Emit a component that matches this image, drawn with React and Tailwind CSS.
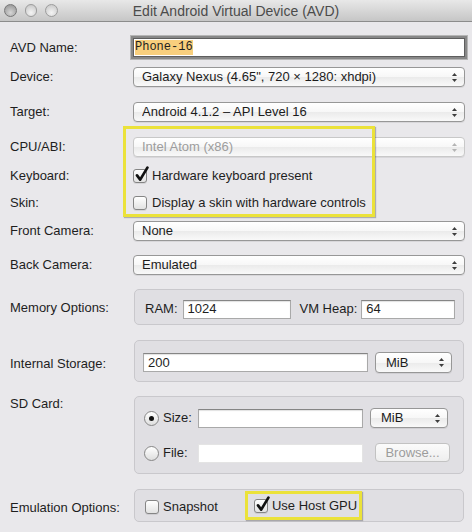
import React from 'react';

const Arrows = ({ color = '#3d3d3d' }) => (
    <svg width="7" height="11" viewBox="0 0 7 11" className="shrink-0">
        <path d="M1 4L3.5 1L6 4Z" fill={color} />
        <path d="M1 7L3.5 10L6 7Z" fill={color} />
    </svg>
);

function Select({ value, disabled, className = '' }) {
    return (
        <div
            className={`flex items-center h-5 pl-[8px] pr-[6px] rounded-[4px] border bg-[linear-gradient(to_bottom,#ffffff_0%,#f7f7f7_50%,#ebebeb_52%,#f9f9f9_100%)] shadow-[0_1px_0_rgba(0,0,0,0.07)] ${disabled ? 'border-[#c8c8c8] text-[#9d9d9d]' : 'border-[#979797] text-[#1c1c1c]'} ${className}`}
        >
            <span className="flex-1 truncate">{value}</span>
            <Arrows color={disabled ? '#b4b4b4' : '#3d3d3d'} />
        </div>
    );
}

function Field({ value = '', className = '', disabled }) {
    return (
        <div
            className={`flex items-center h-[19px] px-[4px] bg-white border ${disabled ? 'border-[#e4e4e4]' : 'border-[#a9a9a9] border-t-[#858585] shadow-[inset_0_1px_1px_rgba(0,0,0,0.12)]'} ${className}`}
        >
            {value}
        </div>
    );
}

function Checkbox({ checked }) {
    return (
        <span className="relative block w-[14px] h-[14px] shrink-0 rounded-[3px] border border-[#858585] bg-[linear-gradient(to_bottom,#ffffff,#e2e2e2)] shadow-[0_1px_0_rgba(0,0,0,0.08)]">
            {checked && (
                <svg className="absolute -top-[4px] left-[0px]" width="16" height="17" viewBox="0 0 16 17">
                    <path d="M3 9.4L6.2 13.6L13.4 1.6" stroke="#111" strokeWidth="2.7" fill="none" strokeLinecap="round" strokeLinejoin="round" />
                </svg>
            )}
        </span>
    );
}

function Radio({ checked }) {
    return (
        <span className="flex items-center justify-center w-[15px] h-[15px] shrink-0 rounded-full border border-[#878787] bg-[linear-gradient(to_bottom,#ffffff,#dedede)]">
            {checked && <span className="w-[5px] h-[5px] rounded-full bg-[#111]" />}
        </span>
    );
}

function Group({ className = '', children }) {
    return (
        <div className={`ml-[1px] w-[330px] rounded-[5px] border border-[#c9c8cc] bg-[#e0dfe3] ${className}`}>
            {children}
        </div>
    );
}

function Row({ label, className = '', labelClass = '', align = 'items-center', children }) {
    return (
        <div className={`flex ${align} ${className}`}>
            <div className={`w-[133px] shrink-0 pl-[10px] ${labelClass}`}>{label}</div>
            <div className="w-[332px]">{children}</div>
        </div>
    );
}

function Light({ dark }) {
    return (
        <span
            className={`block w-[13px] h-[13px] rounded-full border ${dark ? 'border-[#777] bg-[radial-gradient(circle_at_50%_70%,#d6d6d6,#8e8e8e)]' : 'border-[#9c9c9c] bg-[radial-gradient(circle_at_50%_70%,#f4f4f4,#c2c2c2)]'}`}
        />
    );
}

export default function App() {
    return (
        <div className="relative w-[472px] h-[532px] overflow-hidden bg-[#e9e8eb] text-[13px] leading-[16px] text-[#1e1e1e] font-['Liberation_Sans',Arial,sans-serif]">
            {/* title bar */}
            <div className="flex items-center h-[22px] border-b border-[#8c8c8c] bg-[linear-gradient(to_bottom,#e8e8e8,#c6c6c6)]">
                <div className="flex items-center gap-[8px] pl-[4px] w-[58px]">
                    <Light dark />
                    <Light />
                    <Light />
                </div>
                <div className="flex-1 text-center text-[14px] text-[#4b4b4b]">Edit Android Virtual Device (AVD)</div>
                <div className="w-[58px]" />
            </div>

            <div className="flex flex-col">
                <Row label="AVD Name:" className="mt-[16px] h-[19px]">
                    <div className="flex items-center h-[19px] px-[1px] bg-white border border-[#5e5e5e] shadow-[0_0_0_2px_#888888,0_0_0_3px_#b5b5b5]">
                        <span className="bg-[#f8cf7d] font-['Liberation_Mono',monospace] text-[12px] leading-[15px]">Phone-16</span>
                    </div>
                </Row>

                <Row label="Device:" className="mt-[10px] h-5">
                    <Select value={'Galaxy Nexus (4.65", 720 × 1280: xhdpi)'} />
                </Row>

                <Row label="Target:" className="mt-[15px] h-5">
                    <Select value="Android 4.1.2 – API Level 16" />
                </Row>

                <Row label="CPU/ABI:" className="mt-[15px] h-5">
                    <Select value="Intel Atom (x86)" disabled />
                </Row>

                <Row label="Keyboard:" className="mt-[9px] h-5">
                    <div className="flex items-center gap-[5px]">
                        <Checkbox checked />
                        <span>Hardware keyboard present</span>
                    </div>
                </Row>

                <Row label="Skin:" className="mt-[7px] h-5">
                    <div className="flex items-center gap-[5px]">
                        <Checkbox />
                        <span>Display a skin with hardware controls</span>
                    </div>
                </Row>

                <Row label="Front Camera:" className="mt-[8px] h-5">
                    <Select value="None" />
                </Row>

                <Row label="Back Camera:" className="mt-[14px] h-5">
                    <Select value="Emulated" />
                </Row>

                <Row label="Memory Options:" className="mt-[14px] h-[36px]" labelClass="pt-[1px]">
                    <Group className="h-[36px] pt-[9px] pl-[10px]">
                        <div className="flex items-center h-5">
                            <span>RAM:</span>
                            <Field value="1024" className="ml-[5px] w-[108px] h-5" />
                            <span className="ml-[9px]">VM Heap:</span>
                            <Field value="64" className="ml-[4px] w-[94px] h-5" />
                        </div>
                    </Group>
                </Row>

                <Row label="Internal Storage:" className="mt-[15px] h-[42px]" labelClass="pt-[6px]">
                    <Group className="h-[42px] pt-[11px] pl-[8px]">
                        <div className="flex items-center h-[21px]">
                            <Field value="200" className="w-[225px]" />
                            <Select value="MiB" className="ml-[7px] w-[77px] h-[21px] pl-[10px]" />
                        </div>
                    </Group>
                </Row>

                <Row label="SD Card:" className="mt-[14px] h-[78px]" align="items-start" labelClass="pt-0">
                    <Group className="h-[78px] pt-[11px] pl-[9px]">
                        <div className="flex items-center h-5">
                            <Radio checked />
                            <span className="ml-[4px] w-[35px]">Size:</span>
                            <Field className="w-[165px] h-5" />
                            <Select value="MiB" className="ml-[7px] w-[78px] pl-[10px]" />
                        </div>
                        <div className="flex items-center h-5 mt-[15px]">
                            <Radio />
                            <span className="ml-[4px] w-[35px]">File:</span>
                            <Field className="w-[165px]" disabled />
                            <div className="ml-[12px] w-[75px] h-[19px] -mt-[1px] flex items-center justify-center rounded-[4px] border border-[#c2c2c2] bg-[linear-gradient(to_bottom,#fbfbfb,#eeeeee)] text-[#9c9c9c]">
                                Browse...
                            </div>
                        </div>
                    </Group>
                </Row>

                <Row label="Emulation Options:" className="mt-[15px] h-[33px]" labelClass="pt-[4px]">
                    <Group className="h-[33px] flex items-center pl-[10px]">
                        <div className="flex items-center gap-[4px] pt-[2px]">
                            <Checkbox />
                            <span>Snapshot</span>
                        </div>
                        <div className="ml-[27px] flex items-center gap-[4px] h-[29px] pl-[6px] pr-[2px] border-[3px] border-[#ebe23a] shadow-[1px_1px_1px_rgba(0,0,0,0.25)]">
                            <Checkbox checked />
                            <span>Use Host GPU</span>
                        </div>
                    </Group>
                </Row>
            </div>

            {/* annotation box */}
            <div className="absolute left-[123px] top-[126px] w-[252px] h-[91px] border-[3px] border-[#ebe23a] shadow-[1px_1px_1px_rgba(0,0,0,0.25)]" />
        </div>
    );
}
